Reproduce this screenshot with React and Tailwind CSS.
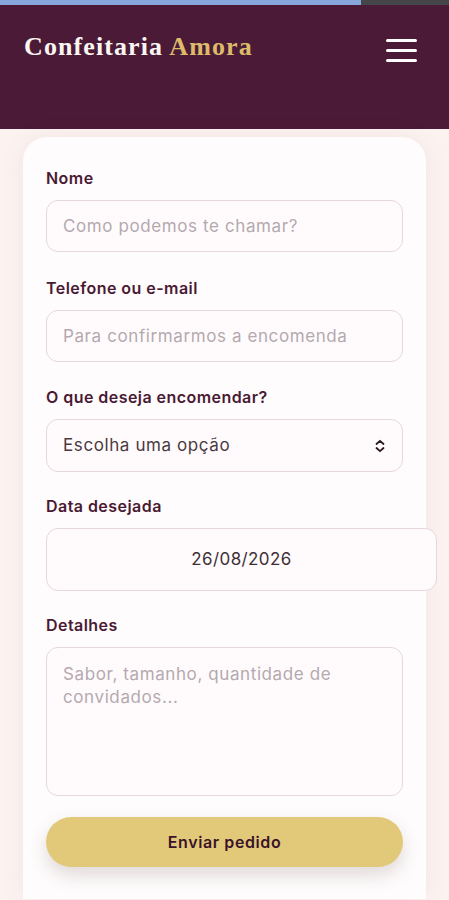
import React from "react";

const field =
  "block h-[52px] w-full rounded-[12px] border border-[#e6d8de] bg-[#fffbfd] px-4 text-[17px] tracking-[0.6px] text-[#4a3a40] outline-none placeholder:text-[#b4a9ae]";

export default function App() {
  const sans = { fontFamily: "Inter, 'Noto Sans', sans-serif" };
  return (
    <div className="min-h-[900px] w-full bg-[#fcf3f1]" style={sans}>
      <div className="flex h-[5px] w-full">
        <div className="h-full w-[361px] bg-[#86a6dc]" />
        <div className="h-full flex-1 bg-[#45454a]" />
      </div>
      <header className="flex h-[124px] items-start justify-between bg-[#4b1a37] pl-6 pr-8 pt-[28px]">
        <h1
          className="text-[26px] font-bold leading-[28px] tracking-[1.1px] text-[#fbf6f2]"
          style={{ fontFamily: "'Liberation Serif', serif" }}
        >
          Confeitaria <span className="text-[#dcbb6b]">Amora</span>
        </h1>
        <button className="mt-[6px] flex w-[31px] flex-col gap-[7px]" aria-label="menu">
          <span className="block h-[3px] w-full rounded bg-white" />
          <span className="block h-[3px] w-full rounded bg-white" />
          <span className="block h-[3px] w-full rounded bg-white" />
        </button>
      </header>
      <div className="px-[23px] pt-[8px]">
        <form className="rounded-t-[24px] bg-[#fefcfd] px-[23px] pb-8 pt-[31px] shadow-[0_0_24px_rgba(120,60,70,0.08)]">
          <Label>Nome</Label>
          <input className={`${field} mb-[26px]`} placeholder="Como podemos te chamar?" />
          <Label>Telefone ou e-mail</Label>
          <input className={`${field} mb-[25px]`} placeholder="Para confirmarmos a encomenda" />
          <Label>O que deseja encomendar?</Label>
          <div className="mb-[24px] flex h-[53px] w-full items-center justify-between rounded-[12px] border border-[#e6d8de] bg-[#fffbfd] pl-4 pr-[16px]">
            <span className="text-[17px] tracking-[0.6px] text-[#4a3a40]">Escolha uma opção</span>
            <svg width="12" height="14" viewBox="0 0 12 14" fill="none" stroke="#2a1a22" strokeWidth="1.8" strokeLinecap="round" strokeLinejoin="round">
              <path d="M2.5 5 L6 1.8 L9.5 5" />
              <path d="M2.5 9 L6 12.2 L9.5 9" />
            </svg>
          </div>
          <Label>Data desejada</Label>
          <div className="mb-[24px] flex h-[63px] w-[391px] items-center justify-center rounded-[12px] border border-[#e6d8de] bg-[#fffbfd] text-[17px] tracking-[0.4px] text-[#3e2f35]">
            26/08/2026
          </div>
          <Label>Detalhes</Label>
          <textarea
            className="mb-[21px] block h-[149px] w-full resize-none rounded-[12px] border border-[#e6d8de] bg-[#fffbfd] px-4 pt-[15px] text-[17px] leading-[23px] tracking-[0.6px] text-[#4a3a40] outline-none placeholder:text-[#b4a9ae]"
            placeholder="Sabor, tamanho, quantidade de convidados..."
          />
          <button
            type="button"
            className="block h-[50px] w-full rounded-full bg-[#e2c97a] text-[16px] font-semibold tracking-[0.6px] text-[#3b1329] shadow-[0_8px_18px_rgba(90,60,40,0.18)]"
          >
            Enviar pedido
          </button>
        </form>
      </div>
    </div>
  );
}

function Label({ children }) {
  return (
    <label className="mb-[12px] block text-[16px] font-semibold leading-[20px] tracking-[0.45px] text-[#4a1a33]">
      {children}
    </label>
  );
}
